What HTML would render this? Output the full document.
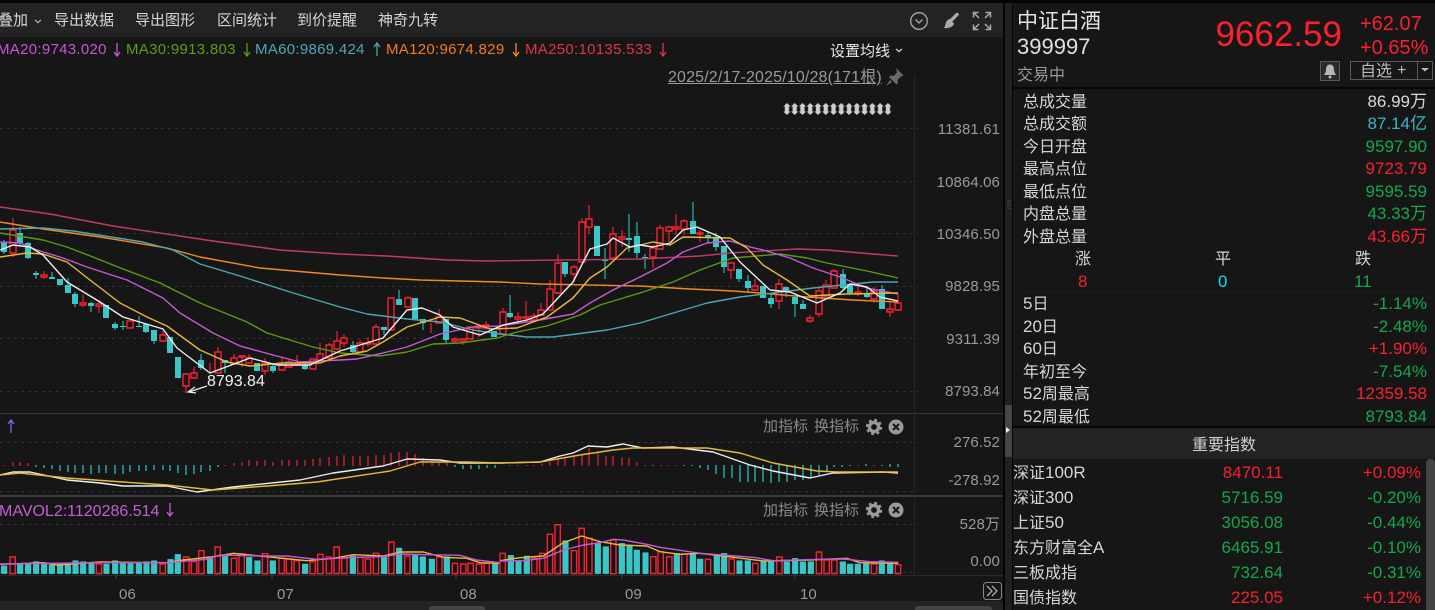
<!DOCTYPE html>
<html lang="zh">
<head>
<meta charset="utf-8">
<title>中证白酒</title>
<style>
html,body{margin:0;padding:0;width:1435px;height:610px;overflow:hidden;background:#161617}
body{position:relative;font-family:"Liberation Sans","Noto Sans CJK SC",sans-serif;font-size:15px;color:#d6d6d6}
.b{position:absolute}
.t{position:absolute;line-height:20px;height:20px;white-space:nowrap}
.n{font-size:17px}
.l{left:1023px;font-size:16px;margin-top:2px}
.d{margin-top:1px}
.v{right:8px;font-size:17px;margin-top:1px}
.v i{font-style:normal;font-size:17px}
.g{color:#14a84a}.r{color:#f9202f}
.ma{letter-spacing:.3px}
.ax{color:#999;right:435px;font-size:15px;letter-spacing:.1px;margin-top:2px}
.m{color:#8a8a8a;font-size:15px}
.x{color:#999;font-size:15px}
.nm{left:1013px;font-size:16px;margin-top:1px}
.iv{right:152px;font-size:17px;margin-top:1px}
.ip{right:14px;font-size:17px;margin-top:1px}
svg{position:absolute;left:0;top:0}
</style>
</head>
<body>
<div class="b" style="left:0;top:0;width:1435px;height:3px;background:#050505"></div>
<div class="b" style="left:0;top:3px;width:1003px;height:34px;background:#232324"></div>
<div class="b" style="left:0;top:601px;width:1003px;height:9px;background:#232324"></div>
<div class="b" style="left:429px;top:606px;width:56px;height:4px;background:#444;border-radius:3px 3px 0 0"></div>
<div class="b" style="left:915px;top:606px;width:77px;height:4px;background:#444;border-radius:3px 3px 0 0"></div>
<div class="b" style="left:0;top:413px;width:1003px;height:1px;background:#38383c"></div>
<div class="b" style="left:0;top:495px;width:1003px;height:2px;background:#3a3a40"></div>
<div class="b" style="left:0;top:575px;width:1003px;height:1px;background:#2a2a2c"></div>
<div class="b" style="left:914px;top:75px;width:1px;height:500px;background:#26262a"></div>
<div class="b" style="left:1003px;top:0;width:2px;height:610px;background:#050505"></div>
<div class="b" style="left:1005px;top:3px;width:7px;height:607px;background:#202021"></div>
<div class="b" style="left:1012px;top:3px;width:1px;height:607px;background:#050505"></div>
<div class="b" style="left:1005px;top:405px;width:7px;height:52px;background:#464646"></div>
<div class="b" style="left:1013px;top:87px;width:422px;height:2px;background:#050505"></div>
<div class="b" style="left:1021px;top:292px;width:406px;height:1px;background:#1f1f20"></div>
<div class="b" style="left:1013px;top:426px;width:422px;height:2px;background:#050505"></div>
<div class="b" style="left:1013px;top:428px;width:422px;height:31px;background:#232324"></div>
<div class="b" style="left:1426px;top:459px;width:9px;height:151px;background:#444;border-radius:4px 4px 0 0"></div>

<svg width="1435" height="610" viewBox="0 0 1435 610" fill="none">
<defs>
<pattern id="ud" x="783" y="103" width="7.77" height="12" patternUnits="userSpaceOnUse">
<path d="M3.9 0L7.5 3.500H6V8.500H7.500L3.900 12L.3 8.500H1.800V3.500H.3Z" fill="#cfcfcf"/>
</pattern>
</defs>
<path d="M1008 200v10M1010 200v10" stroke="#555" stroke-width="1" stroke-dasharray="1 1"/>
<path d="M1006 427l4 3-4 3z" fill="#eee"/>
<!-- grid -->
<path d="M0 128.500H918M0 181.500H918M0 233.500H918M0 286.500H918M0 338.500H918M0 391.500H918M0 442.500H918M0 491.500H918M0 524.500H918M0 572.500H918" stroke="#2f323a" stroke-dasharray="3 4"/>
<!-- ticks -->
<path d="M116 574v5M272 574v5M456 574v5M622 574v5M795 574v5" stroke="#444"/>
<!-- candle wicks -->
<path stroke="#2ba5a5" stroke-width="1.300" d="M4 240V254M20 227V245M28 242V259M36 271V279M52 272V279M60 279V286M68 278V293M75 292V307M91 302V312M115 322V330M123 321V330M139 316V327M146 324V333M154 330V344M201 354V370M225 360V373M273 364V373M305 363V370M353 341V354M384 327V335M399 290V305M423 319V330M446 319V343M510 295V318M565 262V277M605 248V279M629 214V252M637 222V258M645 254V269M693 202V234M708 232V243M716 233V251M724 246V273M739 269V282M748 275V293M771 293V308M786 287V297M795 297V317M803 300V309M843 269V289M850 285V295M867 287V298M882 285V309"/>
<path stroke="#d8202f" stroke-width="1.300" d="M13 218V257M44 271V279M83 295V307M99 300V313M163 331V342M186 386V393M194 367V379M210 363V373M218 347V373M234 354V365M242 355V367M249 354V364M265 358V375M282 357V371M289 360V368M297 355V366M320 343V360M329 343V360M337 331V350M344 334V347M360 340V354M368 337V347M376 324V345M408 296V308M431 323V333M439 309V323M455 337V343M463 339V345M479 326V337M486 321V330M503 308V336M518 312V323M526 301V322M534 313V322M541 303V316M550 280V311M558 254V294M574 265V282M582 218V263M589 205V234M613 227V258M622 230V247M653 245V268M660 225V250M669 227V242M676 214V235M684 219V235M700 230V242M731 263V279M755 279V291M779 279V309M810 315V323M819 288V317M826 280V297M834 269V289M858 284V296M874 287V303M890 302V317M898 294V310"/>
<!-- candle bodies -->
<path stroke="#3ac6c6" stroke-width="6" d="M4 243V252M20 233V243M28 243V258M36 273V275M52 277V279M60 279V285M68 285V293M75 294V304M91 303V306M106 305V318M115 324V328M123 326V327M139 326V327M146 324V332M154 330V341M170 337V353M178 357V378M201 360V368M225 360V363M257 363V371M273 366V371M305 365V369M353 345V352M384 327V330M399 299V305M415 298V319M423 319V323M446 319V340M494 331V337M510 313V317M565 262V274M597 226V256M605 259V261M629 238V240M637 236V253M645 257V258M693 221V234M708 235V237M716 237V247M724 246V267M739 269V279M748 281V288M763 286V298M771 298V304M786 287V292M795 297V304M803 304V309M843 274V288M850 285V293M867 294V297M882 289V309"/>
<path stroke="#f9202f" stroke-width="1.400" fill="#161617" d="M10 230h6v23h-6zM41 275h6v2h-6zM80 303h6v2h-6zM96 304h6v2h-6zM127 321h6v7h-6zM160 335h6v6h-6zM183 374h6v12h-6zM191 373h6v5h-6zM215 352h6v21h-6zM231 358h6v6h-6zM239 356h6v1h-6zM246 358h6v5h-6zM262 363h6v8h-6zM279 365h6v5h-6zM286 362h6v5h-6zM294 364h6v1h-6zM310 359h6v10h-6zM317 354h6v6h-6zM326 345h6v13h-6zM334 341h6v8h-6zM341 338h6v5h-6zM357 343h6v9h-6zM365 343h6v1h-6zM373 327h6v17h-6zM388 298h6v32h-6zM405 298h6v9h-6zM436 317h6v6h-6zM452 339h6v2h-6zM460 339h6v2h-6zM467 327h6v12h-6zM476 326h6v2h-6zM483 325h6v3h-6zM500 312h6v22h-6zM515 317h6v2h-6zM523 317h6v1h-6zM531 316h6v4h-6zM538 310h6v5h-6zM547 289h6v21h-6zM555 263h6v30h-6zM571 267h6v7h-6zM579 222h6v40h-6zM586 219h6v8h-6zM610 234h6v24h-6zM619 237h6v2h-6zM650 248h6v9h-6zM657 228h6v21h-6zM666 227h6v4h-6zM673 227h6v2h-6zM681 221h6v8h-6zM697 233h6v1h-6zM728 263h6v7h-6zM752 286h6v4h-6zM776 284h6v17h-6zM807 318h6v3h-6zM816 291h6v23h-6zM823 285h6v11h-6zM831 271h6v17h-6zM855 292h6v2h-6zM871 291h6v8h-6zM887 309h6v3h-6zM895 303h6v7h-6z"/>
<!-- MA lines -->
<g stroke-width="1.400" stroke-linejoin="round">
<polyline stroke="#c23c60" points="0,207 50,214 113,226 213,241 280,250 340,254 387,256 447,260 487,261 640,259 700,256 730,253 797,249 827,250 873,254 898,256"/>
<polyline stroke="#f08a24" points="0,222 43,229 100,237 167,248 200,257 260,268 340,275 383,278 420,280 500,282 540,284 640,286 690,289 733,291 760,293 807,297 853,300 898,302"/>
<polyline stroke="#4fa5b0" points="0,229 43,228 73,231 143,242 173,250 200,264 240,276 290,292 340,307 367,314 407,319 440,322 473,330 500,334 527,337 553,337 607,330 640,323 680,311 707,303 740,297 773,293 813,288 853,284 873,282 898,282"/>
<polyline stroke="#5b9a12" points="0,233 43,240 67,247 93,257 123,269 160,283 200,303 247,322 267,333 313,347 340,353 380,356 407,352 433,344 460,343 497,338 517,332 547,326 580,315 600,305 640,293 673,282 700,270 733,258 780,254 807,258 827,263 867,271 898,278"/>
<polyline stroke="#c858d8" points="0,242 20,243 37,250 63,258 87,267 127,280 163,298 180,313 213,333 240,346 273,355 300,362 340,360 357,359 383,353 407,347 440,334 473,327 500,326 540,320 573,314 590,303 613,290 640,277 667,263 683,252 707,243 730,241 750,247 763,250 790,258 813,268 840,277 867,288 898,294"/>
<polyline stroke="#e8b83c" points="0,257 27,253 43,254 67,262 90,280 120,303 147,317 167,326 200,350 227,362 250,366 283,363 320,363 340,356 367,351 383,342 407,327 440,317 460,318 490,329 517,328 547,317 573,298 590,278 607,267 627,248 640,245 653,242 670,245 683,237 730,238 747,248 763,265 787,280 810,296 847,294 898,293"/>
<polyline stroke="#eeeeee" points="0,250 13,245 30,247 43,255 67,282 100,302 123,317 163,329 177,348 210,373 250,358 277,365 310,365 340,351 383,338 407,310 422,308 440,315 453,327 480,335 503,325 527,320 543,314 573,282 590,249 607,244 613,238 630,247 640,245 653,247 670,243 683,230 697,227 720,237 740,262 770,290 790,292 817,303 840,293 850,284 867,287 880,297 898,301"/>
</g>
<!-- 8793.84 arrow -->
<path d="M207 386L189 392M195 387L188 392L196 393" stroke="#eee" stroke-width="1.200"/>
<!-- MACD histogram -->
<path stroke="#c02030" stroke-width="1.500" d="M4 466v-1M13 466v-4M20 466v-4M28 466v-3M225 466v-1M234 466v-3M242 466v-4M249 466v-6M257 466v-5M265 466v-6M273 466v-4M282 466v-6M289 466v-6M297 466v-6M305 466v-6M313 466v-7M320 466v-8M329 466v-9M337 466v-10M344 466v-11M353 466v-10M360 466v-10M368 466v-10M376 466v-11M384 466v-11M391 466v-13M399 466v-14M407 466v-14M415 466v-12M423 466v-8M432 466v-6M439 466v-4M447 466v-3M510 466v-1M518 466v-1M527 466v-1M534 466v-1M542 466v-2M550 466v-4M558 466v-8M565 466v-7M574 466v-9M582 466v-12M589 466v-18M598 466v-14M606 466v-10M613 466v-10M622 466v-8M629 466v-8M637 466v-4M645 466v-1M661 466v-1M668 466v-1M676 466v-1M858 466v-1M874 466v-1"/>
<path stroke="#2ba5a5" stroke-width="1.500" d="M36 465v2M44 465v3M52 465v4M60 465v6M68 465v7M75 465v8M83 465v8M91 465v9M99 465v8M106 465v8M115 465v9M123 465v9M130 465v7M139 465v6M146 465v6M154 465v5M163 465v5M170 465v6M178 465v8M186 465v10M194 465v9M201 465v7M210 465v6M218 465v2M455 465v2M463 465v4M471 465v4M479 465v4M487 465v3M495 465v3M653 465v1M684 465v1M692 465v1M700 465v3M708 465v5M716 465v9M724 465v13M732 465v13M740 465v17M748 465v17M755 465v17M763 465v17M771 465v18M779 465v17M787 465v17M795 465v15M803 465v15M811 465v13M819 465v10M827 465v6M834 465v2M842 465v2M850 465v1M866 464v2M882 465v1M890 464v3M898 464v3"/>
<!-- MACD lines -->
<g stroke-width="1.400" stroke-linejoin="round">
<polyline stroke="#eeeeee" points="0,475 13,472 30,472 67,480 100,483 123,486 167,486 197,492 233,487 300,480 333,473 383,466 407,459 440,460 460,463 500,463 540,462 560,456 573,453 588,446 607,447 623,444 643,448 673,447 713,452 750,465 773,471 810,478 833,473 883,472 898,473"/>
<polyline stroke="#e8b83c" points="0,475 20,473 67,478 123,482 167,485 213,490 267,486 317,482 390,471 420,462 467,462 500,463 540,462 580,455 613,450 633,448 707,448 740,453 773,463 817,471 837,472 883,472 898,472"/>
</g>
<!-- Volume (coords in 3x space) -->
<g transform="matrix(.33333 0 0 .33333 0 410)">
<path fill="#3ac6c6" stroke="#3ac6c6" stroke-width="1.500" d="M4 467V491h17V467zM52 462V491h17V462zM76 462V491h17V462zM100 455V491h17V455zM124 458V491h17V458zM147 465V491h17V465zM172 465V491h17V465zM195 460V491h17V460zM218 452V491h17V452zM241 455V491h17V455zM266 460V491h17V460zM311 462V491h17V462zM337 452V491h17V452zM360 458V491h17V458zM383 460V491h17V460zM408 460V491h17V460zM431 455V491h17V455zM454 452V491h17V452zM503 448V491h17V448zM525 433V491h17V433zM622 440V491h17V440zM667 438V491h17V438zM739 442V491h17V442zM764 452V491h17V452zM810 452V491h17V452zM907 462V491h17V462zM1050 438V491h17V438zM1144 442V491h17V442zM1189 414V491h17V414zM1237 436V491h17V436zM1260 440V491h17V440zM1287 447V491h17V447zM1332 440V491h17V440zM1477 460V491h17V460z"/>
<path stroke="#f9202f" stroke-width="4.200" d="M30 441V491h16V441zM289 462V491h16V462zM480 462V491h16V462zM551 441V491h16V441zM574 455V491h16V455zM596 422V491h16V422zM645 411V491h16V411zM694 445V491h16V445zM717 432V491h16V432zM787 431V491h16V431zM837 445V491h16V445zM859 447V491h16V447zM882 452V491h16V452zM930 455V491h16V455zM953 433V491h16V433zM979 441V491h16V441zM1002 411V491h16V411zM1025 445V491h16V445zM1073 442V491h16V442zM1096 447V491h16V447zM1120 430V491h16V430zM1166 396V491h16V396zM1214 438V491h16V438zM1310 440V491h16V440zM1357 460V491h16V460zM1382 462V491h16V462zM1404 460V491h16V460zM1429 462V491h16V462zM1452 460V491h16V460z"/>
<g stroke-width="4.200" stroke-linejoin="round">
<polyline stroke="#e8b83c" points="0,463 130,458 170,465 300,456 500,458 550,450 640,440 700,430 800,440 920,452 1000,445 1060,434 1150,438 1200,426 1270,426 1330,442 1400,445 1440,458 1500,460"/>
<polyline stroke="#c858d8" points="0,462 300,458 500,458 620,448 660,435 780,438 860,438 950,448 1060,442 1150,440 1200,432 1280,434 1380,436 1430,450 1500,458"/>
</g>
</g>
<g transform="matrix(.33333 0 0 .33333 500 410)">
<path fill="#3ac6c6" stroke="#3ac6c6" stroke-width="1.500" d="M24 436V491h17V436zM47 452V491h17V452zM72 438V491h17V438zM188 392V491h17V392zM285 400V491h17V400zM309 410V491h17V410zM357 400V491h17V400zM380 405V491h17V405zM402 420V491h17V420zM428 428V491h17V428zM522 430V491h17V430zM570 430V491h17V430zM592 447V491h17V447zM642 435V491h17V435zM664 430V491h17V430zM710 452V491h17V452zM735 452V491h17V452zM782 455V491h17V455zM805 452V491h17V452zM852 455V491h17V455zM877 445V491h17V445zM900 455V491h17V455zM924 455V491h17V455zM1020 455V491h17V455zM1042 462V491h17V462zM1065 462V491h17V462zM1090 460V491h17V460zM1137 452V491h17V452zM1162 460V491h17V460z"/>
<path stroke="#f9202f" stroke-width="4.200" d="M0 430V491h16V430zM95 445V491h16V445zM119 430V491h16V430zM142 373V491h16V373zM165 344V491h16V344zM214 422V491h16V422zM237 355V491h16V355zM260 385V491h16V385zM332 390V491h16V390zM452 440V491h16V440zM474 425V491h16V425zM500 440V491h16V440zM545 432V491h16V432zM616 448V491h16V448zM687 447V491h16V447zM758 460V491h16V460zM830 441V491h16V441zM949 426V491h16V426zM972 450V491h16V450zM995 450V491h16V450zM1114 462V491h16V462zM1186 464V491h16V464z"/>
<g stroke-width="4.200" stroke-linejoin="round">
<polyline stroke="#e8b83c" points="0,452 60,443 130,438 190,398 245,378 300,395 360,405 440,408 480,425 540,433 600,430 700,442 790,453 930,450 1040,445 1080,458 1195,460"/>
<polyline stroke="#c858d8" points="0,453 70,452 130,445 190,420 250,405 300,398 340,388 370,390 440,403 480,412 600,430 760,442 820,452 960,448 1030,447 1110,455 1195,457"/>
</g>
</g>
<!-- marker row -->
<rect x="783" y="103" width="108.800" height="12" fill="url(#ud)"/>
<!-- header arrows -->
<g stroke-width="1.300">
<path stroke="#c858d8" d="M117 43V56M114 52L117 56L120 52"/>
<path stroke="#5b9a12" d="M247 43V56M244 52L247 56L250 52"/>
<path stroke="#4fa5b0" d="M377 56V43M374 47L377 43L380 47"/>
<path stroke="#f08a24" d="M516 43V56M513 52L516 56L519 52"/>
<path stroke="#e0344c" d="M663 43V56M660 52L663 56L666 52"/>
<path stroke="#8a60e8" d="M11 433V420M8 424L11 420L14 424"/>
<path stroke="#c858d8" d="M170 503V516M167 512L170 516L173 512"/>
</g>
<!-- chevrons -->
<path d="M35 20l3 2.500 3-2.500" stroke="#aaa" stroke-width="1.300"/>
<path d="M896 49l3 2.500 3-2.500" stroke="#ccc" stroke-width="1.300"/>
<!-- toolbar icons -->
<circle cx="919" cy="21" r="8.300" stroke="#aaa" stroke-width="1.300"/>
<path d="M915.500 19.500l3.500 3.500 3.500-3.500" stroke="#aaa" stroke-width="1.300"/>
<path d="M957 14.500l-5.500 5.500" stroke="#aaa" stroke-width="3.400" stroke-linecap="round"/>
<path d="M949.500 19l4.500 4.500c-.5 3-4 5-10.500 4.500 2-1.500 1.500-3 2.500-5.500 .5-1.500 2-3 3.500-3.500z" fill="#aaa"/>
<g stroke="#aaa" stroke-width="1.500">
<path d="M973.500 17.500V12.500H978.500M974 13L979 18"/>
<path d="M990.500 17.500V12.500H985.500M990 13L985 18"/>
<path d="M973.500 24.500V29.500H978.500M974 29L979 24"/>
<path d="M990.500 24.500V29.500H985.500M990 29L985 24"/>
</g>
<!-- pin -->
<path d="M896 68l7.500 7.500-2.500 1-3.500 3.500.5 3-1.500 1.500-7.500-7.500 1.500-1.500 3 .5 3.500-3.500zM890 80l-4 6 6-4z" fill="#6a6a6a"/>
<!-- panel icons -->
<g>
<circle cx="874" cy="427" r="4.600" stroke="#9a9a9a" stroke-width="3.400"/>
<circle cx="874" cy="427" r="7" stroke="#9a9a9a" stroke-width="2.400" stroke-dasharray="2.750 2.750"/>
<circle cx="896" cy="427" r="7.500" fill="#9a9a9a"/>
<path d="M893 424l6 6M899 424l-6 6" stroke="#161617" stroke-width="2"/>
<circle cx="874" cy="510" r="4.600" stroke="#9a9a9a" stroke-width="3.400"/>
<circle cx="874" cy="510" r="7" stroke="#9a9a9a" stroke-width="2.400" stroke-dasharray="2.750 2.750"/>
<circle cx="896" cy="510" r="7.500" fill="#9a9a9a"/>
<path d="M893 507l6 6M899 507l-6 6" stroke="#161617" stroke-width="2"/>
</g>
<!-- double chevron -->
<rect x="983.500" y="582.500" width="18" height="17" rx="3" stroke="#888"/>
<path d="M987 586l5 5-5 5M992 586l5 5-5 5" stroke="#aaa" stroke-width="1.300"/>
<!-- bell + watch buttons -->
<rect x="1320.500" y="61.500" width="19" height="19" fill="#2a2a2a" stroke="#5a5a5a"/>
<path d="M1330 64.500c-3 0-4 2.500-4 5 0 3-1.500 4-2 5.500h12c-.5-1.500-2-2.500-2-5.500 0-2.500-1-5-4-5z" fill="#b5b5b5"/>
<circle cx="1330" cy="77" r="1.500" fill="#b5b5b5"/>
<rect x="1350.500" y="61.500" width="67" height="18" stroke="#5a5a5a"/>
<rect x="1417.500" y="61.500" width="15" height="18" stroke="#5a5a5a"/>
<path d="M1421 68h8l-4 3.500z" fill="#bbb"/>
</svg>

<!-- toolbar -->
<span class="t" style="left:-2px;top:11px">叠加</span>
<span class="t" style="left:54px;top:11px">导出数据</span>
<span class="t" style="left:135px;top:11px">导出图形</span>
<span class="t" style="left:217px;top:11px">区间统计</span>
<span class="t" style="left:297px;top:11px">到价提醒</span>
<span class="t" style="left:378px;top:11px">神奇九转</span>

<!-- MA row -->
<span class="t ma" style="left:-3px;top:40px;color:#c955d8">MA20:9743.020</span>
<span class="t ma" style="left:126px;top:40px;color:#5a9e10">MA30:9913.803</span>
<span class="t ma" style="left:255px;top:40px;color:#4ca8b8">MA60:9869.424</span>
<span class="t ma" style="left:386px;top:40px;color:#f47a1f">MA120:9674.829</span>
<span class="t ma" style="left:525px;top:40px;color:#e0344c">MA250:10135.533</span>
<span class="t" style="left:830px;top:42px;color:#e8e8e8">设置均线</span>
<span class="t" style="left:668px;top:68px;color:#999;font-size:16px;letter-spacing:.15px;text-decoration:underline">2025/2/17-2025/10/28(171根)</span>

<!-- axis -->
<span class="t ax" style="top:118px">11381.61</span>
<span class="t ax" style="top:171px">10864.06</span>
<span class="t ax" style="top:223px">10346.50</span>
<span class="t ax" style="top:275px">9828.95</span>
<span class="t ax" style="top:328px">9311.39</span>
<span class="t ax" style="top:380px">8793.84</span>
<span class="t ax" style="top:431px">276.52</span>
<span class="t ax" style="top:469px">-278.92</span>
<span class="t ax" style="top:513px">528万</span>
<span class="t ax" style="top:550px">0.00</span>
<span class="t" style="left:207px;top:372px;color:#f2f2f2;font-size:16px">8793.84</span>

<span class="t m" style="left:763px;top:417px">加指标</span>
<span class="t m" style="left:814px;top:417px">换指标</span>
<span class="t m" style="left:763px;top:501px">加指标</span>
<span class="t m" style="left:814px;top:501px">换指标</span>
<span class="t" style="left:-1px;top:502px;color:#c95cd8;font-size:16px">MAVOL2:1120286.514</span>

<span class="t x" style="left:119px;top:585px">06</span>
<span class="t x" style="left:277px;top:585px">07</span>
<span class="t x" style="left:460px;top:585px">08</span>
<span class="t x" style="left:625px;top:585px">09</span>
<span class="t x" style="left:800px;top:585px">10</span>

<!-- right header -->
<span class="t" style="left:1017px;top:12px;font-size:21px;color:#e4e4e4">中证白酒</span>
<span class="t" style="left:1017px;top:37px;font-size:22px;color:#e0e0e0">399997</span>
<span class="t" style="left:1017px;top:66px;font-size:16px;color:#999">交易中</span>
<span class="t r" style="right:93px;top:25px;font-size:35px">9662.59</span>
<span class="t r" style="left:1360px;top:14px;font-size:20px">+62.07</span>
<span class="t r" style="left:1360px;top:38px;font-size:20px">+0.65%</span>
<span class="t" style="left:1360px;top:62px;font-size:16px;color:#bbb">自选</span>
<span class="t" style="left:1397px;top:61px;font-size:16px;color:#bbb">+</span>

<!-- stats -->
<span class="t l" style="top:91px">总成交量</span><span class="t v" style="top:91px;color:#d8d8d8">86.99<i>万</i></span>
<span class="t l" style="top:113px">总成交额</span><span class="t v" style="top:113px;color:#3ab5c5">87.14<i>亿</i></span>
<span class="t l" style="top:136px">今日开盘</span><span class="t v g" style="top:136px">9597.90</span>
<span class="t l" style="top:158px">最高点位</span><span class="t v r" style="top:158px">9723.79</span>
<span class="t l" style="top:181px">最低点位</span><span class="t v g" style="top:181px">9595.59</span>
<span class="t l" style="top:203px">内盘总量</span><span class="t v g" style="top:203px">43.33<i>万</i></span>
<span class="t l" style="top:226px">外盘总量</span><span class="t v r" style="top:226px">43.66<i>万</i></span>
<span class="t" style="left:1075px;top:250px;font-size:16px">涨</span>
<span class="t" style="left:1215px;top:250px;font-size:16px">平</span>
<span class="t" style="left:1355px;top:250px;font-size:16px">跌</span>
<span class="t n r" style="left:1078px;top:272px">8</span>
<span class="t n" style="left:1218px;top:272px;color:#00e5f0">0</span>
<span class="t n g" style="left:1354px;top:272px">11</span>
<span class="t l d" style="top:293px"><span class="n">5</span>日</span><span class="t v g" style="top:293px">-1.14%</span>
<span class="t l d" style="top:316px"><span class="n">20</span>日</span><span class="t v g" style="top:316px">-2.48%</span>
<span class="t l d" style="top:338px"><span class="n">60</span>日</span><span class="t v r" style="top:338px">+1.90%</span>
<span class="t l" style="top:361px">年初至今</span><span class="t v g" style="top:361px">-7.54%</span>
<span class="t l d" style="top:383px"><span class="n">52</span>周最高</span><span class="t v r" style="top:383px">12359.58</span>
<span class="t l d" style="top:406px"><span class="n">52</span>周最低</span><span class="t v g" style="top:406px">8793.84</span>

<span class="t" style="left:1192px;top:436px;font-size:16px;color:#d0d0d0">重要指数</span>

<span class="t nm" style="top:462px">深证<span class="n">100R</span></span><span class="t iv r" style="top:462px">8470.11</span><span class="t ip r" style="top:462px">+0.09%</span>
<span class="t nm" style="top:487px">深证<span class="n">300</span></span><span class="t iv g" style="top:487px">5716.59</span><span class="t ip g" style="top:487px">-0.20%</span>
<span class="t nm" style="top:512px">上证<span class="n">50</span></span><span class="t iv g" style="top:512px">3056.08</span><span class="t ip g" style="top:512px">-0.44%</span>
<span class="t nm" style="top:537px">东方财富全<span class="n">A</span></span><span class="t iv g" style="top:537px">6465.91</span><span class="t ip g" style="top:537px">-0.10%</span>
<span class="t nm" style="top:563px">三板成指</span><span class="t iv g" style="top:562px">732.64</span><span class="t ip g" style="top:562px">-0.31%</span>
<span class="t nm" style="top:588px">国债指数</span><span class="t iv r" style="top:587px">225.05</span><span class="t ip r" style="top:587px">+0.12%</span>
</body>
</html>
